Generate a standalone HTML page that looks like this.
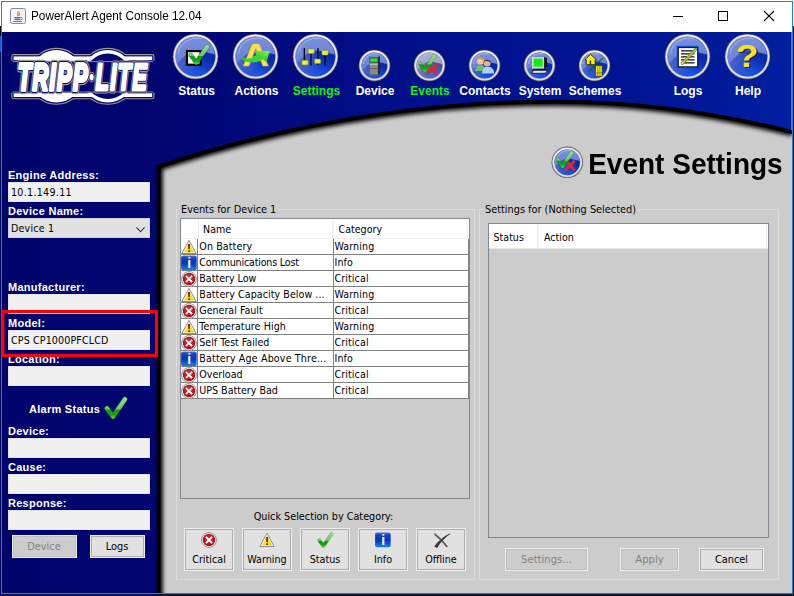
<!DOCTYPE html><html><head><meta charset="utf-8"><title>PowerAlert Agent Console 12.04</title><style>
html,body{margin:0;padding:0}
body{width:794px;height:596px;position:relative;overflow:hidden;background:#0a1640;font-family:"DejaVu Sans Condensed", "Liberation Sans", sans-serif;font-size:11px;color:#000}
div,span{box-sizing:border-box}
.abs{position:absolute}
#win{position:absolute;left:1px;top:1px;width:792px;height:593px;background:#1883d7}
#inner{position:absolute;left:1px;top:1px;width:790px;height:591px;background:#cccccc;overflow:hidden}
#titlebar{position:absolute;left:0;top:0;width:790px;height:30px;background:#fff}
#title{position:absolute;left:29px;top:6.4px;transform-origin:0 12px;transform:scaleY(1.05);font-family:"Liberation Sans", sans-serif;font-size:11.8px;line-height:16px;white-space:nowrap;color:#000;letter-spacing:0px}
.lbl{position:absolute;left:6px;color:#fff;font-weight:bold;font-family:"Liberation Sans", sans-serif;font-size:11px;line-height:13px;white-space:nowrap;letter-spacing:0.27px;margin-top:1px}
.fld{position:absolute;left:6px;width:142px;height:20px;background:#f0f0f0;border:1px solid #e3e3e3;font-size:10.6px;line-height:18px;padding-left:2px;white-space:nowrap}
.nav{position:absolute;color:#fff;font-weight:bold;font-family:"Liberation Sans", sans-serif;font-size:12px;line-height:14px;white-space:nowrap;transform:translateX(-50%)}
.nav.g{color:#12f312}
.btn{position:absolute;background:#e1e1e1;border:1px solid #adadad;outline:1px solid #f0f0f0;text-align:center;font-size:10.6px;white-space:nowrap}
.btn.dis{background:#cccccc;border-color:#bfbfbf;color:#838383;outline-color:#ececec}
.ptitle{font-family:"Liberation Sans", sans-serif;font-weight:bold;font-size:28px;line-height:32px;white-space:nowrap}
.grp{position:absolute;border:1px solid #dcdcdc}
.gt{position:absolute;background:#cccccc;font-size:10.85px;line-height:13px;white-space:nowrap;padding:0 2px}
.tbl{position:absolute;border:1px solid #828790;background:#cccccc}
.hdr{position:absolute;background:#fff;font-size:10.6px;white-space:nowrap}
.row{position:absolute;left:0;height:16px;width:287px;background:#fff;border-bottom:1px solid #808080;font-size:10.6px;line-height:15px;white-space:nowrap}
.row .ic{position:absolute;left:0;top:0;width:17px;height:15px;border-right:1px solid #808080}
.row .nm{position:absolute;left:18px;top:0;width:135px;height:15px;border-right:1px solid #808080;padding-left:0.3px;overflow:hidden}
.row .ct{position:absolute;left:153px;top:0;padding-left:0.5px;letter-spacing:0.1px}
</style></head><body>

<svg width="0" height="0" style="position:absolute">
<defs>
<linearGradient id="rim" x1="0" y1="0" x2="0" y2="1"><stop offset="0" stop-color="#f4f4f4"/><stop offset="1" stop-color="#dcdcdc"/></linearGradient>
<linearGradient id="ball" x1="0" y1="0" x2="1" y2="0"><stop offset="0" stop-color="#4d66cf"/><stop offset="0.42" stop-color="#3450c2"/><stop offset="0.62" stop-color="#0b2cab"/><stop offset="1" stop-color="#0a2ba6"/></linearGradient>
<radialGradient id="glow" cx="0.6" cy="1.0" r="0.5"><stop offset="0" stop-color="#1c58f2"/><stop offset="1" stop-color="#1c58f2" stop-opacity="0"/></radialGradient>
<linearGradient id="gloss" x1="0" y1="0" x2="0.2" y2="1"><stop offset="0" stop-color="#7c92de"/><stop offset="1" stop-color="#687fd3"/></linearGradient>
<linearGradient id="ballg" x1="0" y1="0" x2="1" y2="0"><stop offset="0" stop-color="#7a86c0"/><stop offset="0.6" stop-color="#4a58a8"/><stop offset="1" stop-color="#46529e"/></linearGradient>
<radialGradient id="glowg" cx="0.6" cy="1.0" r="0.5"><stop offset="0" stop-color="#5a6cc8"/><stop offset="1" stop-color="#5a6cc8" stop-opacity="0"/></radialGradient>
<linearGradient id="glossg" x1="0" y1="0" x2="0.2" y2="1"><stop offset="0" stop-color="#aab3d8"/><stop offset="1" stop-color="#98a2cc"/></linearGradient>
<linearGradient id="chk" x1="0" y1="0" x2="1" y2="1"><stop offset="0" stop-color="#7be06a"/><stop offset="0.5" stop-color="#22b020"/><stop offset="1" stop-color="#0a7a10"/></linearGradient>
<linearGradient id="warn" x1="0" y1="0" x2="0.6" y2="1"><stop offset="0" stop-color="#fffbe0"/><stop offset="0.6" stop-color="#ffe82a"/><stop offset="1" stop-color="#f5d800"/></linearGradient>
<linearGradient id="info" x1="0" y1="0" x2="0" y2="1"><stop offset="0" stop-color="#5a78dc"/><stop offset="0.14" stop-color="#1a44c0"/><stop offset="0.5" stop-color="#0636b4"/><stop offset="1" stop-color="#1482f0"/></linearGradient>
<radialGradient id="crit" cx="0.5" cy="0.4" r="0.6"><stop offset="0" stop-color="#d8303a"/><stop offset="1" stop-color="#a80c18"/></radialGradient>
<linearGradient id="arr" x1="0" y1="1" x2="1" y2="0"><stop offset="0" stop-color="#3ccf2c"/><stop offset="0.6" stop-color="#40d62e"/><stop offset="1" stop-color="#8cf04a"/></linearGradient>
<linearGradient id="fade" x1="0" y1="0" x2="0" y2="1"><stop offset="0" stop-color="#000"/><stop offset="1" stop-color="#000" stop-opacity="0"/></linearGradient>
<filter id="blur1" x="-10%" y="-10%" width="120%" height="120%"><feGaussianBlur stdDeviation="1.9"/></filter>
<linearGradient id="chkg" gradientUnits="userSpaceOnUse" x1="0" y1="1" x2="0" y2="25"><stop offset="0" stop-color="#9be094"/><stop offset="0.55" stop-color="#6cc868"/><stop offset="0.58" stop-color="#109a10"/><stop offset="0.8" stop-color="#12a812"/><stop offset="1" stop-color="#96f53a"/></linearGradient>
<g id="chkmark"><path d="M3.9 13.4 L10 21.5 L22 4.2" stroke="#0a6a0e" stroke-width="5.4" stroke-linecap="round" stroke-linejoin="round" fill="none" opacity="0.55"/><path d="M3.9 13.4 L10 21.5 L22 4.2" stroke="url(#chkg)" stroke-width="4.4" stroke-linecap="round" stroke-linejoin="round" fill="none"/></g>
<g id="icwarn"><path d="M8 1.3 L15.2 14.5 L0.8 14.5 Z" fill="#fff" stroke="#8a8a8a" stroke-width="1" stroke-linejoin="round"/><path d="M8 3.6 L13.4 13.5 L2.6 13.5 Z" fill="url(#warn)"/><text x="8.05" y="12.9" text-anchor="middle" font-family='"Liberation Sans", sans-serif' font-weight="bold" font-size="10.4" fill="#000">!</text></g>
<g id="icinfo"><rect x="0.1" y="0.6" width="15.6" height="14.7" rx="2" fill="url(#info)"/><text x="8.1" y="12.7" text-anchor="middle" font-family='"Liberation Sans", sans-serif' font-weight="bold" font-size="14" fill="#fff">i</text></g>
<g id="iccrit"><circle cx="8" cy="8" r="7.5" fill="#eeeeee" stroke="#8e8e8e" stroke-width="0.9"/><circle cx="8" cy="8" r="6.2" fill="url(#crit)"/><path d="M4.9 4.9 L11.1 11.1 M11.1 4.9 L4.9 11.1" stroke="#fff" stroke-width="2" stroke-linecap="butt"/></g>
</defs></svg>

<div class="abs" style="left:0;top:0;width:794px;height:1px;background:#fff"></div>
<div class="abs" style="left:0;top:0;width:1px;height:26px;background:#fff"></div>
<div class="abs" style="left:0;top:26px;width:1px;height:10px;background:#000"></div>
<div class="abs" style="left:0;top:36px;width:1px;height:16px;background:#0a64c8"></div>
<div class="abs" style="left:0;top:52px;width:1px;height:544px;background:#020a5a"></div>
<div class="abs" style="left:793px;top:0;width:1px;height:26px;background:#fff"></div>
<div class="abs" style="left:793px;top:26px;width:1px;height:570px;background:#000"></div>
<div id="win"><div id="inner">
<div id="titlebar">
<svg class="abs" style="left:8px;top:6px" width="16" height="16" viewBox="0 0 16 16"><rect x="0.5" y="0.5" width="15" height="15" rx="1.8" fill="#f4f4f6" stroke="#7d8aa8"/><path d="M8.6 3.2 C6.2 5 9.6 6 7.2 8.2 M10 4.6 C8.4 6 10 6.8 8.6 8.2" stroke="#e8721c" stroke-width="1.1" fill="none"/><path d="M4.2 9.6 H10.4 M4.6 11.4 H10 " stroke="#4a6fa8" stroke-width="1.1"/><path d="M10.6 9.4 C13 9.4 13 11.8 10.4 11.8" stroke="#4a6fa8" stroke-width="1" fill="none"/><path d="M3.4 13.4 H11.6" stroke="#4a6fa8" stroke-width="1"/></svg>
<div id="title">PowerAlert Agent Console 12.04</div>
<div class="abs" style="left:671px;top:14px;width:10px;height:1px;background:#000"></div>
<div class="abs" style="left:716px;top:9px;width:10px;height:10px;border:1px solid #000"></div>
<svg class="abs" style="left:761px;top:8px" width="12" height="12" viewBox="0 0 12 12"><path d="M1 1 L11 11 M11 1 L1 11" stroke="#000" stroke-width="1.1"/></svg>
</div>
<svg class="abs" style="left:0;top:30px" width="790" height="561" viewBox="2 32 790 561">
<defs><linearGradient id="navy" gradientUnits="userSpaceOnUse" x1="2" y1="0" x2="792" y2="0"><stop offset="0" stop-color="#01036c"/><stop offset="0.2" stop-color="#010570"/><stop offset="0.5" stop-color="#010f8b"/><stop offset="0.8" stop-color="#001594"/><stop offset="1" stop-color="#001fa0"/></linearGradient><clipPath id="cclip"><path d="M157 593 L157 165.2 Q356 99.7 555 99.7 Q673 99.7 792 130 L792 593 Z"/></clipPath></defs>
<rect x="2" y="32" width="790" height="561" fill="#cccccc"/>
<path d="M156.6 600 L156.6 165.2 Q356 99.7 555 99.7 Q673 99.7 793 130.3" fill="none" stroke="#000" stroke-width="12.4" filter="url(#blur1)"/>
<path d="M156.6 600 L156.6 165.2 Q356 99.7 555 99.7 Q673 99.7 793 130.3" fill="none" stroke="#000" stroke-width="7.6"/>
<path d="M2 32 H792 V130 Q673 99.7 555 99.7 Q356 99.7 156.6 165.2 V593 H2 Z" fill="url(#navy)"/>
<rect x="791" y="32" width="1" height="98" fill="#6a70b8"/>
</svg>
<svg class="abs" style="left:3px;top:40px" width="160" height="70" viewBox="5 42 160 70">
<g fill="#9a9a94" stroke="#9a9a94" stroke-width="4.6" stroke-linejoin="round"><circle cx="56.4" cy="76.3" r="26.2"/><circle cx="107.8" cy="76.3" r="26.2"/><rect x="13.6" y="56.4" width="138.6" height="3.8"/><rect x="13.6" y="93.3" width="138.6" height="3.7"/></g>
<g fill="#03056e" stroke="#03056e" stroke-width="2.4" stroke-linejoin="round"><circle cx="56.4" cy="76.3" r="26.2"/><circle cx="107.8" cy="76.3" r="26.2"/><rect x="13.6" y="56.4" width="138.6" height="3.8"/><rect x="13.6" y="93.3" width="138.6" height="3.7"/></g>
<g fill="#fff"><circle cx="56.4" cy="76.3" r="26.2"/><circle cx="107.8" cy="76.3" r="26.2"/><rect x="13.6" y="56.4" width="138.6" height="3.8"/><rect x="13.6" y="93.3" width="138.6" height="3.7"/></g>
<circle cx="107.8" cy="76.3" r="22.8" fill="#03056e"/>
<rect x="11" y="60.9" width="144" height="31.7" fill="#03056e"/>
<path d="M12.6 61.6 H153 M12.6 92 H153" stroke="#9a9a94" stroke-width="0.9"/>
<g transform="translate(17.8 89.8) scale(0.592 1)">
<text x="0" y="0" font-family='"Liberation Sans", sans-serif' font-weight="bold" font-style="italic" font-size="37" letter-spacing="2.2" vector-effect="non-scaling-stroke" stroke-linejoin="round" fill="#9a9a94" stroke="#9a9a94" stroke-width="7.0">TRIPP<tspan font-size="12" dy="-8.6" dx="2.4">•</tspan><tspan dy="8.6" dx="2.6">LITE</tspan></text>
<text x="0" y="0" font-family='"Liberation Sans", sans-serif' font-weight="bold" font-style="italic" font-size="37" letter-spacing="2.2" vector-effect="non-scaling-stroke" stroke-linejoin="round" fill="#03056e" stroke="#03056e" stroke-width="5.0">TRIPP<tspan font-size="12" dy="-8.6" dx="2.4">•</tspan><tspan dy="8.6" dx="2.6">LITE</tspan></text>
<text x="0" y="0" font-family='"Liberation Sans", sans-serif' font-weight="bold" font-style="italic" font-size="37" letter-spacing="2.2" vector-effect="non-scaling-stroke" stroke-linejoin="round" fill="#fff" stroke="#fff" stroke-width="3.2">TRIPP<tspan font-size="12" dy="-8.6" dx="2.4">•</tspan><tspan dy="8.6" dx="2.6">LITE</tspan></text>
</g></svg>
<svg class="abs" style="left:170.1px;top:31.0px" width="47" height="47" viewBox="-23.50 -23.50 47 47"><circle r="22.95" fill="#444650" opacity="0.9"/><circle r="22.35" fill="#a8a8ae"/><circle r="21.80" fill="url(#rim)"/><circle r="20.30" fill="#9a9eb4"/><circle r="19.80" fill="url(#ball)"/><circle r="19.80" fill="url(#glow)"/><path d="M -18.51 7.03 A 19.80 19.80 0 1 1 19.70 -1.94 C 13.86 -3.37 3.96 -6.53 -2.38 -5.94 C -5.94 -5.35 -11.88 0.00 -18.51 7.03 Z" fill="url(#gloss)"/><path d="M -17.49 -2.26 A 18.81 18.81 0 0 1 6.58 -17.49" fill="none" stroke="#b9c6f2" stroke-width="0.9" opacity="0.7"/><rect x="-9.6" y="-6.5" width="15.8" height="15.8" fill="#000"/><rect x="-7.4" y="-4.3" width="11.4" height="11.4" fill="#fff"/><use href="#chkmark" transform="translate(-8.2 -13.4) scale(0.9)"/></svg>
<svg class="abs" style="left:230.2px;top:31.0px" width="47" height="47" viewBox="-23.50 -23.50 47 47"><circle r="22.95" fill="#444650" opacity="0.9"/><circle r="22.35" fill="#a8a8ae"/><circle r="21.80" fill="url(#rim)"/><circle r="20.30" fill="#9a9eb4"/><circle r="19.80" fill="url(#ball)"/><circle r="19.80" fill="url(#glow)"/><path d="M -18.51 7.03 A 19.80 19.80 0 1 1 19.70 -1.94 C 13.86 -3.37 3.96 -6.53 -2.38 -5.94 C -5.94 -5.35 -11.88 0.00 -18.51 7.03 Z" fill="url(#gloss)"/><path d="M -17.49 -2.26 A 18.81 18.81 0 0 1 6.58 -17.49" fill="none" stroke="#b9c6f2" stroke-width="0.9" opacity="0.7"/><g transform="translate(0.2 9.6) scale(1.16 1)"><text x="0" y="0" text-anchor="middle" font-family='"Liberation Sans", sans-serif' font-weight="bold" font-size="32" fill="#ffe445" stroke="#e8c020" stroke-width="0.4">A</text></g><path d="M-14.7 1.1 L-8.7 2.3 L-3.7 1.3 L0.8 -1.5 L-1 -5.5 L14.5 -5.5 L10.6 5.7 L7.8 3 L2.3 5.5 L-5.7 6 L-10.2 5 Z" fill="url(#arr)"/></svg>
<svg class="abs" style="left:290.2px;top:31.0px" width="47" height="47" viewBox="-23.50 -23.50 47 47"><circle r="22.95" fill="#444650" opacity="0.9"/><circle r="22.35" fill="#a8a8ae"/><circle r="21.80" fill="url(#rim)"/><circle r="20.30" fill="#9a9eb4"/><circle r="19.80" fill="url(#ball)"/><circle r="19.80" fill="url(#glow)"/><path d="M -18.51 7.03 A 19.80 19.80 0 1 1 19.70 -1.94 C 13.86 -3.37 3.96 -6.53 -2.38 -5.94 C -5.94 -5.35 -11.88 0.00 -18.51 7.03 Z" fill="url(#gloss)"/><path d="M -17.49 -2.26 A 18.81 18.81 0 0 1 6.58 -17.49" fill="none" stroke="#b9c6f2" stroke-width="0.9" opacity="0.7"/><path d="M-11.2 -8.5 V4.4 M-4.5 -2.4 V9.2 M2.4 -8.5 V8.5 M9.5 -1 V9.7" stroke="#05051a" stroke-width="1.3"/><rect x="-13.6" y="3.8" width="6.2" height="4.6" rx="1" fill="#f4e83a" stroke="#6a9a10" stroke-width="0.5"/><rect x="-7.4" y="-7.5" width="6.2" height="4.6" rx="1" fill="#f4e83a" stroke="#6a9a10" stroke-width="0.5"/><rect x="-1.0" y="2.5" width="6.2" height="4.6" rx="1" fill="#f4e83a" stroke="#6a9a10" stroke-width="0.5"/><rect x="6.4" y="-6.0" width="6.2" height="4.6" rx="1" fill="#f4e83a" stroke="#6a9a10" stroke-width="0.5"/></svg>
<svg class="abs" style="left:356.0px;top:47.0px" width="33" height="33" viewBox="-16.50 -16.50 33 33"><circle r="15.95" fill="#444650" opacity="0.9"/><circle r="15.35" fill="#a8a8ae"/><circle r="14.80" fill="url(#rim)"/><circle r="13.30" fill="#9a9eb4"/><circle r="12.80" fill="url(#ball)"/><circle r="12.80" fill="url(#glow)"/><path d="M -11.97 4.54 A 12.80 12.80 0 1 1 12.74 -1.25 C 8.96 -2.18 2.56 -4.22 -1.54 -3.84 C -3.84 -3.46 -7.68 0.00 -11.97 4.54 Z" fill="url(#gloss)"/><path d="M -11.31 -1.46 A 12.16 12.16 0 0 1 4.26 -11.31" fill="none" stroke="#b9c6f2" stroke-width="0.9" opacity="0.7"/><path d="M-5.2 -8.6 L3.6 -8.6 L5.4 -9.6 L5.4 8 L3.6 9.4 L-5.2 9.4 Z" fill="#2a2a2a"/><rect x="-5" y="-8.4" width="8.4" height="17.6" fill="#8a8a8a"/><rect x="-5" y="-8.4" width="8.4" height="6" fill="#555"/><rect x="-4.2" y="-7" width="6.8" height="3.2" fill="#18f028"/><rect x="-5" y="-1.8" width="8.4" height="1" fill="#cfcfcf"/><rect x="-5" y="2.6" width="8.4" height="0.8" fill="#5a5a5a"/><rect x="1.6" y="7.6" width="1.4" height="1" fill="#ff8a1a"/></svg>
<svg class="abs" style="left:411.0px;top:47.0px" width="33" height="33" viewBox="-16.50 -16.50 33 33"><circle r="15.95" fill="#444650" opacity="0.9"/><circle r="15.35" fill="#a8a8ae"/><circle r="14.80" fill="url(#rim)"/><circle r="13.30" fill="#9a9eb4"/><circle r="12.80" fill="url(#ballg)"/><circle r="12.80" fill="url(#glowg)"/><path d="M -11.97 4.54 A 12.80 12.80 0 1 1 12.74 -1.25 C 8.96 -2.18 2.56 -4.22 -1.54 -3.84 C -3.84 -3.46 -7.68 0.00 -11.97 4.54 Z" fill="url(#glossg)"/><path d="M -11.31 -1.46 A 12.16 12.16 0 0 1 4.26 -11.31" fill="none" stroke="#b9c6f2" stroke-width="0.9" opacity="0.7"/><use href="#chkmark" transform="translate(-12.5 -12.7) scale(0.8)"/><path d="M-1.4 7.2 L6.9 -0.6 M1 1 L6.8 7.4" stroke="#cf2a34" stroke-width="3" stroke-linecap="round"/></svg>
<svg class="abs" style="left:466.0px;top:47.0px" width="33" height="33" viewBox="-16.50 -16.50 33 33"><circle r="15.95" fill="#444650" opacity="0.9"/><circle r="15.35" fill="#a8a8ae"/><circle r="14.80" fill="url(#rim)"/><circle r="13.30" fill="#9a9eb4"/><circle r="12.80" fill="url(#ball)"/><circle r="12.80" fill="url(#glow)"/><path d="M -11.97 4.54 A 12.80 12.80 0 1 1 12.74 -1.25 C 8.96 -2.18 2.56 -4.22 -1.54 -3.84 C -3.84 -3.46 -7.68 0.00 -11.97 4.54 Z" fill="url(#gloss)"/><path d="M -11.31 -1.46 A 12.16 12.16 0 0 1 4.26 -11.31" fill="none" stroke="#b9c6f2" stroke-width="0.9" opacity="0.7"/><path d="M-9.6 5.6 C-9.6 1 -7 -0.6 -4.2 -0.6 C-1.4 -0.6 0.6 1 0.6 5.6 Z" fill="#62c46a"/><circle cx="-4.2" cy="-4.2" r="3.5" fill="#f2c49a"/><path d="M-7.9 -4.2 A3.8 3.8 0 0 1 -0.4 -4.8 C-2.5 -5.5 -4.5 -6.5 -5.5 -7 C-6.5 -6 -7 -5 -7.9 -4.2Z" fill="#e0a83a"/><path d="M-2.4 8 C-2.4 3 0 1.2 3 1.2 C6.4 1.2 9.6 3 9.6 8 Z" fill="#a8d4f4"/><circle cx="2.6" cy="-2.6" r="3.5" fill="#eab08a"/><path d="M-1.1 -2.8 A3.8 3.8 0 0 1 6.4 -2.8 C4.5 -4 3 -4.6 1 -4.6 Z" fill="#444"/></svg>
<svg class="abs" style="left:521.0px;top:47.0px" width="33" height="33" viewBox="-16.50 -16.50 33 33"><circle r="15.95" fill="#444650" opacity="0.9"/><circle r="15.35" fill="#a8a8ae"/><circle r="14.80" fill="url(#rim)"/><circle r="13.30" fill="#9a9eb4"/><circle r="12.80" fill="url(#ball)"/><circle r="12.80" fill="url(#glow)"/><path d="M -11.97 4.54 A 12.80 12.80 0 1 1 12.74 -1.25 C 8.96 -2.18 2.56 -4.22 -1.54 -3.84 C -3.84 -3.46 -7.68 0.00 -11.97 4.54 Z" fill="url(#gloss)"/><path d="M -11.31 -1.46 A 12.16 12.16 0 0 1 4.26 -11.31" fill="none" stroke="#b9c6f2" stroke-width="0.9" opacity="0.7"/><path d="M4.6 -8.8 L7.4 -7.4 L7.4 1.2 L4.6 3.2 Z" fill="#111"/><rect x="-7.6" y="-8.4" width="12.2" height="11.4" fill="#d6d6d6"/><rect x="-5.8" y="-6.8" width="9" height="8" fill="#10f010"/><path d="M-7.6 5.4 L-5.6 3.6 L7.6 3.6 L6 5.4 Z" fill="#111"/><path d="M-7.8 7.8 L-5.8 4.8 L7.8 4.8 L6 7.8 Z" fill="#e2e2e2" stroke="#111" stroke-width="0.8"/></svg>
<svg class="abs" style="left:576.0px;top:47.0px" width="33" height="33" viewBox="-16.50 -16.50 33 33"><circle r="15.95" fill="#444650" opacity="0.9"/><circle r="15.35" fill="#a8a8ae"/><circle r="14.80" fill="url(#rim)"/><circle r="13.30" fill="#9a9eb4"/><circle r="12.80" fill="url(#ball)"/><circle r="12.80" fill="url(#glow)"/><path d="M -11.97 4.54 A 12.80 12.80 0 1 1 12.74 -1.25 C 8.96 -2.18 2.56 -4.22 -1.54 -3.84 C -3.84 -3.46 -7.68 0.00 -11.97 4.54 Z" fill="url(#gloss)"/><path d="M -11.31 -1.46 A 12.16 12.16 0 0 1 4.26 -11.31" fill="none" stroke="#b9c6f2" stroke-width="0.9" opacity="0.7"/><path d="M-6 6 L8.6 -7.6" stroke="#0a5a2a" stroke-width="1.1"/><path d="M-4 -11.2 L2 -5.6 L0.6 -5.6 L0.6 -0.8 L-8.2 -0.8 L-8.2 -5.6 L-9.8 -5.6 Z" fill="#fff200" stroke="#222" stroke-width="0.9" stroke-linejoin="round"/><rect x="-4.9" y="-5" width="1.6" height="4.2" fill="#4a3a00"/><rect x="1" y="0.2" width="6.6" height="10.6" fill="#fff200" stroke="#333" stroke-width="0.7"/><path d="M3.2 0.2 V10.8 M5.4 0.2 V10.8 M1 7.4 H7.6" stroke="#7a6a00" stroke-width="0.8"/></svg>
<svg class="abs" style="left:662.2px;top:31.0px" width="47" height="47" viewBox="-23.50 -23.50 47 47"><circle r="22.95" fill="#444650" opacity="0.9"/><circle r="22.35" fill="#a8a8ae"/><circle r="21.80" fill="url(#rim)"/><circle r="20.30" fill="#9a9eb4"/><circle r="19.80" fill="url(#ball)"/><circle r="19.80" fill="url(#glow)"/><path d="M -18.51 7.03 A 19.80 19.80 0 1 1 19.70 -1.94 C 13.86 -3.37 3.96 -6.53 -2.38 -5.94 C -5.94 -5.35 -11.88 0.00 -18.51 7.03 Z" fill="url(#gloss)"/><path d="M -17.49 -2.26 A 18.81 18.81 0 0 1 6.58 -17.49" fill="none" stroke="#b9c6f2" stroke-width="0.9" opacity="0.7"/><rect x="-10.8" y="-10.6" width="21.6" height="21.6" fill="#0a4ee0"/><rect x="-9.6" y="-9.4" width="20.4" height="20.4" fill="#111"/><rect x="-8.6" y="-8.4" width="18.2" height="18.2" fill="#fff"/><path d="M-6.4 -5.6 H7 M-6.4 -2.6 H7 M-6.4 0.4 H7 M-6.4 3.4 H7 M-6.4 6.4 H7" stroke="#111" stroke-width="1.2"/><path d="M-5.2 6.8 L8 -7" stroke="#2a9a3a" stroke-width="3.2" stroke-linecap="round"/><path d="M-4.8 6.4 L7.8 -6.8" stroke="#f0a030" stroke-width="2" stroke-linecap="round"/><path d="M-5.6 7.2 L-4.4 6" stroke="#f6f03a" stroke-width="1.6" stroke-linecap="round"/></svg>
<svg class="abs" style="left:722.2px;top:31.0px" width="47" height="47" viewBox="-23.50 -23.50 47 47"><circle r="22.95" fill="#444650" opacity="0.9"/><circle r="22.35" fill="#a8a8ae"/><circle r="21.80" fill="url(#rim)"/><circle r="20.30" fill="#9a9eb4"/><circle r="19.80" fill="url(#ball)"/><circle r="19.80" fill="url(#glow)"/><path d="M -18.51 7.03 A 19.80 19.80 0 1 1 19.70 -1.94 C 13.86 -3.37 3.96 -6.53 -2.38 -5.94 C -5.94 -5.35 -11.88 0.00 -18.51 7.03 Z" fill="url(#gloss)"/><path d="M -17.49 -2.26 A 18.81 18.81 0 0 1 6.58 -17.49" fill="none" stroke="#b9c6f2" stroke-width="0.9" opacity="0.7"/><g transform="scale(1.16 1)"><text x="0.9" y="11.6" text-anchor="middle" font-family='"Liberation Sans", sans-serif' font-weight="bold" font-size="32" fill="#151c50">?</text><text x="-0.3" y="10.4" text-anchor="middle" font-family='"Liberation Sans", sans-serif' font-weight="bold" font-size="32" fill="#ffe21c">?</text></g></svg>
<div class="nav" style="left:194.7px;top:82px">Status</div>
<div class="nav" style="left:254.5px;top:82px">Actions</div>
<div class="nav g" style="left:314.5px;top:82px">Settings</div>
<div class="nav" style="left:373.0px;top:82px">Device</div>
<div class="nav g" style="left:428.0px;top:82px">Events</div>
<div class="nav" style="left:483.0px;top:82px">Contacts</div>
<div class="nav" style="left:538.0px;top:82px">System</div>
<div class="nav" style="left:593.0px;top:82px">Schemes</div>
<div class="nav" style="left:686.0px;top:82px">Logs</div>
<div class="nav" style="left:746.0px;top:82px">Help</div>
<div class="lbl" style="top:166.3px">Engine Address:</div>
<div class="fld" style="top:180px"><span style="letter-spacing:0.3px">10.1.149.11</span></div>
<div class="lbl" style="top:202.4px">Device Name:</div>
<div class="fld" style="top:216px;background:#e1e1e1;border-color:#cfcfcf"><span style="letter-spacing:0.2px">Device 1</span><svg class="abs" style="left:126.6px;top:8.2px" width="10" height="6" viewBox="0 0 10 6"><path d="M0.4 0.4 L4.5 4.6 L8.6 0.4" fill="none" stroke="#3a3a3a" stroke-width="1.1"/></svg></div>
<div class="lbl" style="top:278.4px">Manufacturer:</div>
<div class="fld" style="top:292px"></div>
<div class="lbl" style="top:314.0px">Model:</div>
<div class="fld" style="top:328px"><span style="letter-spacing:0.13px">CPS CP1000PFCLCD</span></div>
<div class="lbl" style="top:350.3px">Location:</div>
<div class="fld" style="top:364px"></div>
<div class="lbl" style="left:27px;top:400.2px">Alarm Status</div>
<svg class="abs" style="left:101px;top:393px" width="26" height="26" viewBox="0 0 26 26"><use href="#chkmark"/></svg>
<div class="lbl" style="top:422.4px">Device:</div>
<div class="fld" style="top:436px"></div>
<div class="lbl" style="top:458.3px">Cause:</div>
<div class="fld" style="top:472px"></div>
<div class="lbl" style="top:494.3px">Response:</div>
<div class="fld" style="top:508px"></div>
<div class="btn dis" style="left:11px;top:534px;width:63px;height:21px;line-height:19px;font-size:10.9px;text-indent:-1px">Device</div>
<div class="btn" style="left:89px;top:534px;width:53px;height:21px;line-height:19px;font-size:10.9px;text-indent:-1px">Logs</div>
<svg class="abs" style="left:549.4px;top:144.1px" width="32" height="32" viewBox="-16.30 -16.30 32 32"><circle r="15.75" fill="#444650" opacity="0.9"/><circle r="15.15" fill="#a8a8ae"/><circle r="14.60" fill="url(#rim)"/><circle r="13.10" fill="#9a9eb4"/><circle r="12.60" fill="url(#ball)"/><circle r="12.60" fill="url(#glow)"/><path d="M -11.78 4.47 A 12.60 12.60 0 1 1 12.54 -1.23 C 8.82 -2.14 2.52 -4.16 -1.51 -3.78 C -3.78 -3.40 -7.56 0.00 -11.78 4.47 Z" fill="url(#gloss)"/><path d="M -11.13 -1.44 A 11.97 11.97 0 0 1 4.19 -11.13" fill="none" stroke="#b9c6f2" stroke-width="0.9" opacity="0.7"/><use href="#chkmark" transform="translate(-12.5 -13) scale(0.78)"/><path d="M-1.4 7 L6.7 -0.6 M1 1 L6.6 7.2" stroke="#dc2830" stroke-width="3" stroke-linecap="round"/></svg>
<div class="abs ptitle" style="left:586.2px;top:146.6px;transform-origin:0 25.4px;transform:scaleY(1.055)">Event Settings</div>
<div class="grp" style="left:174px;top:207px;width:299px;height:371px"></div>
<div class="gt" style="left:177px;top:201px">Events for Device 1</div>
<div class="tbl" style="left:178px;top:216px;width:290px;height:281px">
<div class="hdr" style="left:0;top:0;width:288px;height:20px;line-height:21px;border-bottom:1px solid #efefef"><span class="abs" style="left:17px;top:0;width:1px;height:19px;background:#ececec"></span><span class="abs" style="left:22px">Name</span><span class="abs" style="left:151px;top:0;width:2px;height:19px;background:#f1f1f1"></span><span class="abs" style="left:157.5px">Category</span><span class="abs" style="left:286px;top:0;width:1px;height:19px;background:#efefef"></span></div>
<div class="row" style="top:20px"><span class="ic"><svg class="abs" style="left:0;top:-0.5px" width="16" height="16"><use href="#icwarn"/></svg></span><span class="nm" style="letter-spacing:0.10px">On Battery</span><span class="ct">Warning</span></div>
<div class="row" style="top:36px"><span class="ic"><svg class="abs" style="left:0;top:-0.5px" width="16" height="16"><use href="#icinfo"/></svg></span><span class="nm" style="letter-spacing:-0.17px">Communications Lost</span><span class="ct">Info</span></div>
<div class="row" style="top:52px"><span class="ic"><svg class="abs" style="left:0;top:-0.5px" width="16" height="16"><use href="#iccrit"/></svg></span><span class="nm">Battery Low</span><span class="ct">Critical</span></div>
<div class="row" style="top:68px"><span class="ic"><svg class="abs" style="left:0;top:-0.5px" width="16" height="16"><use href="#icwarn"/></svg></span><span class="nm" style="letter-spacing:0.06px">Battery Capacity Below ...</span><span class="ct">Warning</span></div>
<div class="row" style="top:84px"><span class="ic"><svg class="abs" style="left:0;top:-0.5px" width="16" height="16"><use href="#iccrit"/></svg></span><span class="nm">General Fault</span><span class="ct">Critical</span></div>
<div class="row" style="top:100px"><span class="ic"><svg class="abs" style="left:0;top:-0.5px" width="16" height="16"><use href="#icwarn"/></svg></span><span class="nm" style="letter-spacing:0.10px">Temperature High</span><span class="ct">Warning</span></div>
<div class="row" style="top:116px"><span class="ic"><svg class="abs" style="left:0;top:-0.5px" width="16" height="16"><use href="#iccrit"/></svg></span><span class="nm">Self Test Failed</span><span class="ct">Critical</span></div>
<div class="row" style="top:132px"><span class="ic"><svg class="abs" style="left:0;top:-0.5px" width="16" height="16"><use href="#icinfo"/></svg></span><span class="nm" style="letter-spacing:0.16px">Battery Age Above Thre...</span><span class="ct">Info</span></div>
<div class="row" style="top:148px"><span class="ic"><svg class="abs" style="left:0;top:-0.5px" width="16" height="16"><use href="#iccrit"/></svg></span><span class="nm">Overload</span><span class="ct">Critical</span></div>
<div class="row" style="top:164px"><span class="ic"><svg class="abs" style="left:0;top:-0.5px" width="16" height="16"><use href="#iccrit"/></svg></span><span class="nm">UPS Battery Bad</span><span class="ct">Critical</span></div>
<div class="abs" style="left:287px;top:20px;width:1px;height:160px;background:#808080"></div>
</div>
<div class="abs" style="left:172px;top:508px;width:299px;text-align:center;font-size:10.75px;line-height:13px;white-space:nowrap">Quick Selection by Category:</div>
<div class="btn" style="left:183px;top:527px;width:48px;height:41px;font-size:10.7px"><svg class="abs" style="left:15px;top:2px" width="16" height="16"><use href="#iccrit"/></svg><span class="abs" style="left:0;width:46px;top:22.5px;line-height:14px">Critical</span></div>
<div class="btn" style="left:241px;top:527px;width:48px;height:41px;font-size:10.7px"><svg class="abs" style="left:15px;top:2px" width="16" height="16"><use href="#icwarn"/></svg><span class="abs" style="left:0;width:46px;top:22.5px;line-height:14px">Warning</span></div>
<div class="btn" style="left:299px;top:527px;width:48px;height:41px;font-size:10.7px"><svg class="abs" style="left:15px;top:2px" width="17" height="17" viewBox="0.5 1.2 25 25"><use href="#chkmark"/></svg><span class="abs" style="left:0;width:46px;top:22.5px;line-height:14px">Status</span></div>
<div class="btn" style="left:357px;top:527px;width:48px;height:41px;font-size:10.7px"><svg class="abs" style="left:15px;top:2px" width="16" height="16"><use href="#icinfo"/></svg><span class="abs" style="left:0;width:46px;top:22.5px;line-height:14px">Info</span></div>
<div class="btn" style="left:415px;top:527px;width:48px;height:41px;font-size:10.7px"><svg class="abs" style="left:15px;top:2px" width="18" height="18" viewBox="432 531 18 18"><path d="M449 532.2 C443 535 437 540 433.2 545.4 L436.2 547 C439 541.8 444 536.6 449.2 533 Z" fill="#3c3c3c"/><path d="M433.6 532.4 C438 535.6 442.6 540 446.6 545.6 L445.4 546 C441.6 541 437.6 537 433.2 533.6 Z" fill="#4a4a4a" stroke="#4a4a4a" stroke-width="0.5"/></svg><span class="abs" style="left:0;width:46px;top:22.5px;line-height:14px">Offline</span></div>
<div class="grp" style="left:477px;top:207px;width:300px;height:371px"></div>
<div class="gt" style="left:481px;top:201px">Settings for (Nothing Selected)</div>
<div class="tbl" style="left:486px;top:221px;width:281px;height:315px">
<div class="hdr" style="left:0;top:0;width:279px;height:25px;line-height:26.5px;border-bottom:1px solid #e6e6e6"><span class="abs" style="left:48px;top:0;width:2px;height:24px;background:#f0f0f0"></span><span class="abs" style="left:4.5px">Status</span><span class="abs" style="left:55px">Action</span><span class="abs" style="left:277px;top:0;width:1px;height:24px;background:#ececec"></span></div>
</div>
<div class="btn dis" style="left:504px;top:547px;width:81px;height:21px;line-height:19px;font-size:11.2px">Settings...</div>
<div class="btn dis" style="left:619px;top:547px;width:57px;height:21px;line-height:19px;font-size:11.2px">Apply</div>
<div class="btn" style="left:698px;top:547px;width:63px;height:21px;line-height:19px;font-size:10.9px">Cancel</div>
</div></div>
<svg class="abs" style="left:0;top:305px" width="165" height="60" viewBox="0 305 165 60"><rect x="2.9" y="311.55" width="153.6" height="43.9" fill="none" stroke="#fa0008" stroke-width="3.1"/></svg>
</body></html>
